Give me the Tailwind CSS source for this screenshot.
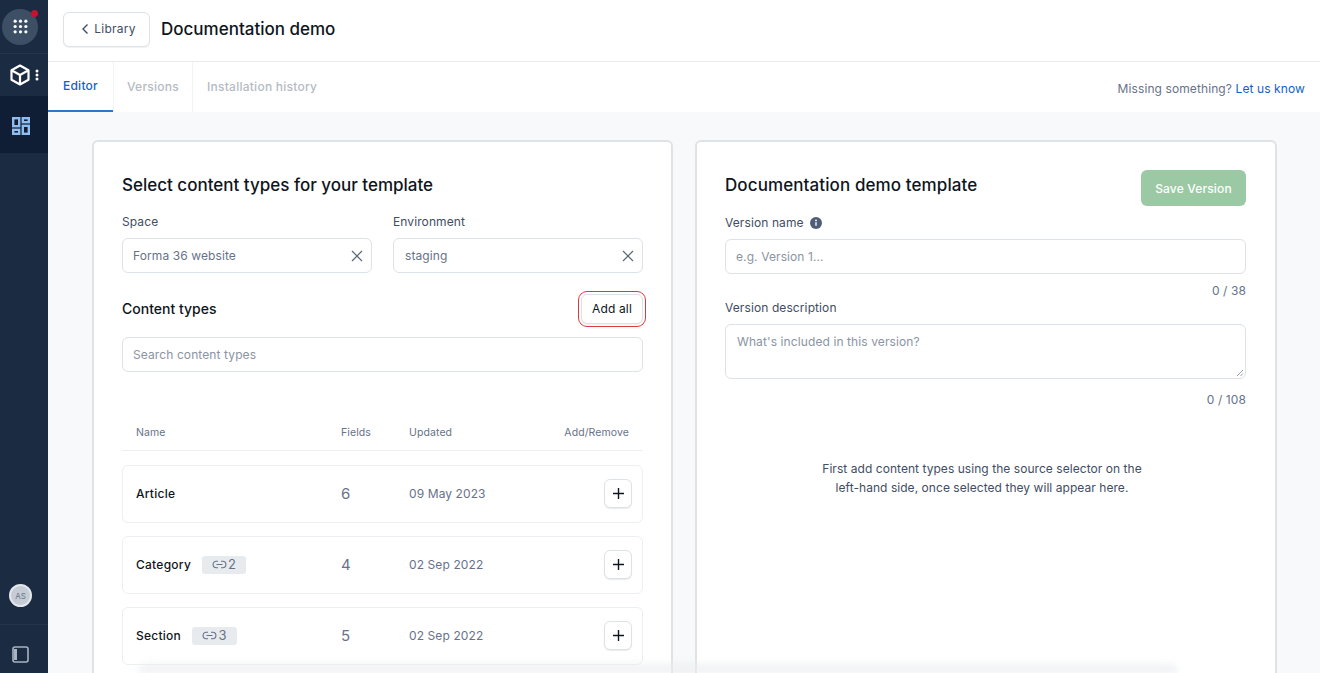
<!DOCTYPE html>
<html lang="en">
<head>
  <meta charset="utf-8" />
  <title>Documentation demo</title>
  <script src="https://cdn.jsdelivr.net/npm/@tailwindcss/browser@4"></script>
</head>
<body class="h-[673px] overflow-hidden flex bg-white font-['Inter',sans-serif] text-[#0e1520]">
  <!-- sidebar -->
  <aside class="w-[48px] shrink-0 h-full flex flex-col bg-[#1b2b41]">
    <div class="h-[54px] flex items-center pl-[2px] border-b border-[#26364b]">
      <div class="relative w-[36px] h-[36px] rounded-full bg-[#3c4f65] flex items-center justify-center">
        <svg width="15" height="15" viewBox="0 0 14 14" fill="#fff"><circle cx="2" cy="2" r="1.500"/><circle cx="7" cy="2" r="1.500"/><circle cx="12" cy="2" r="1.500"/><circle cx="2" cy="7" r="1.500"/><circle cx="7" cy="7" r="1.500"/><circle cx="12" cy="7" r="1.500"/><circle cx="2" cy="12" r="1.500"/><circle cx="7" cy="12" r="1.500"/><circle cx="12" cy="12" r="1.500"/></svg>
        <span class="absolute top-[1px] right-[0px] w-[7px] h-[7px] rounded-full bg-[#c4122f]"></span>
      </div>
    </div>
    <div class="h-[42px] flex items-center pl-[10px] gap-[5px]">
      <svg width="20" height="22" viewBox="0 0 20 22" fill="none" stroke="#fff" stroke-width="2.200" stroke-linejoin="round"><path d="M10 1.500l8.500 4.800v9.400L10 20.500l-8.500-4.800V6.300z"/><path d="M1.500 6.300L10 11l8.500-4.700M10 11v9.500"/></svg>
      <svg width="4" height="12" viewBox="0 0 4 12" fill="#fff"><circle cx="2" cy="2" r="1.500"/><circle cx="2" cy="6" r="1.500"/><circle cx="2" cy="10" r="1.500"/></svg>
    </div>
    <div class="h-[57px] bg-[#0f1e35] flex items-start pt-[21px] pl-[12px]">
      <svg width="18" height="18" viewBox="0 0 18 18" fill="none" stroke="#8fbdf0" stroke-width="2.400"><rect x="1.200" y="1.200" width="6" height="8"/><rect x="10.800" y="1.200" width="6" height="4"/><rect x="1.200" y="12.800" width="6" height="4"/><rect x="10.800" y="8.800" width="6" height="8"/></svg>
    </div>
    <div class="flex-1"></div>
    <div class="h-[60px] flex items-center justify-center border-b border-[#25354a] pr-[7px] pt-[2px]">
      <div class="w-[23px] h-[23px] rounded-full bg-[#c5ccd5] border-2 border-[#e4e8ec] flex items-center justify-center text-[8px] text-[#6b7686]">AS</div>
    </div>
    <div class="h-[48px] flex items-start justify-center pt-[21px] pr-[7px]">
      <svg width="17" height="17" viewBox="0 0 17 17" fill="none" stroke="#a9b4c1" stroke-width="1.600"><rect x="1" y="1" width="15" height="15" rx="2"/><path d="M3.500 3v11" stroke-width="3" stroke="#a9b4c1"/></svg>
    </div>
  </aside>

  <div class="relative flex-1 min-w-0 h-full flex flex-col overflow-hidden">
    <!-- top bar -->
    <header class="h-[62px] shrink-0 flex items-center pl-[15px] pb-[3px] gap-[11px] border-b border-[#e7ebee]">
      <button class="h-[35px] w-[87px] rounded-md border border-[#dde2e6] bg-white flex items-center justify-center gap-[5px] text-[12px] text-[#414d63] tracking-[0.25px] pl-[4px] shadow-[0_1px_1px_rgba(0,0,0,0.06)]">
        <svg width="8" height="12" viewBox="0 0 8 12" fill="none" stroke="#414d63" stroke-width="1.400"><path d="M6.500 1.500L2 6l4.500 4.500"/></svg>
        Library
      </button>
      <h1 class="text-[17px] font-medium pt-[2px]">Documentation demo</h1>
    </header>
    <!-- tabs -->
    <nav class="h-[50px] shrink-0 flex items-center text-[12px] font-medium tracking-[0.25px] bg-white">
      <a class="h-full w-[65px] flex items-center justify-center text-[#0f62c9] border-b-2 border-[#2f74d0]">Editor</a>
      <a class="h-full w-[80px] flex items-center justify-center text-[#b4bbc4] border-l border-r border-[#f1f3f5] pb-[1px]">Versions</a>
      <a class="h-full ml-[14px] flex items-center text-[#b4bbc4] pb-[1px]">Installation history</a>
      <p class="ml-auto mr-[15px] text-[12px] font-normal text-[#67728a] pt-[4px] tracking-[0.1px]">Missing something? <span class="text-[#0f62c9]">Let us know</span></p>
    </nav>
    <!-- content -->
    <main class="flex-1 min-h-0 bg-[#f7f9fa] pt-[28px] pl-[44px] flex gap-[22px] items-start">
      <section class="w-[581px] h-[620px] shrink-0 bg-white rounded-md border-2 border-[#dfe3e7] pt-[31px] px-[28px]">
        <h2 class="text-[17px] font-medium leading-[24px]">Select content types for your template</h2>
        <div class="flex gap-[21px] mt-[15px] text-[12px] tracking-[0.1px]">
          <div class="w-[250px]">
            <label class="block text-[#414d63] leading-[20px]">Space</label>
            <div class="mt-[6px] h-[35px] rounded-md border border-[#dde2e6] flex items-center justify-between pl-[10px] pr-[8px] text-[#67728a]">
              Forma 36 website
              <svg width="12" height="12" viewBox="0 0 12 12" fill="none" stroke="#5a6679" stroke-width="1.200"><path d="M1 1l10 10M11 1L1 11"/></svg>
            </div>
          </div>
          <div class="w-[250px]">
            <label class="block text-[#414d63] leading-[20px]">Environment</label>
            <div class="mt-[6px] h-[35px] rounded-md border border-[#dde2e6] flex items-center justify-between pl-[11px] pr-[8px] text-[#67728a]">
              staging
              <svg width="12" height="12" viewBox="0 0 12 12" fill="none" stroke="#5a6679" stroke-width="1.200"><path d="M1 1l10 10M11 1L1 11"/></svg>
            </div>
          </div>
        </div>
        <div class="flex items-center justify-between mt-[21px]">
          <h3 class="text-[14px] font-medium -mt-[1px]">Content types</h3>
          <button class="h-[30px] w-[62px] rounded-md border border-[#dde2e6] bg-white text-[12px] tracking-[0.15px] text-[#0e1520] outline-[1.5px] outline-[#dc3a3a] outline-offset-[2px] shadow-[0_1px_1px_rgba(0,0,0,0.06)]">Add all</button>
        </div>
        <div class="mt-[13px] h-[35px] rounded-md border border-[#dde2e6] flex items-center pl-[10px] text-[12px] tracking-[0.1px] text-[#8a94a3]">Search content types</div>
        <!-- table -->
        <div class="mt-[50px] h-[29px] border-b border-[#eceff2] flex items-start pt-[1px] pl-[14px] pr-[14px] text-[10.500px] text-[#67728a] leading-[20px] tracking-[0.1px]">
          <span class="w-[205px]">Name</span>
          <span class="w-[68px]">Fields</span>
          <span>Updated</span>
          <span class="ml-auto">Add/Remove</span>
        </div>
        <div class="mt-[14px] flex flex-col gap-[13px] text-[12px] tracking-[0.1px]">
          <div class="h-[58px] rounded-md border border-[#eceff2] flex items-center pl-[13px] pr-[10px]">
            <div class="w-[205px] flex items-center font-medium tracking-[0.25px]">Article</div>
            <div class="w-[68px] text-[15px] text-[#67728a]">6</div>
            <div class="text-[#67728a]">09 May 2023</div>
            <button class="ml-auto -mt-[1px] w-[28px] h-[29px] rounded-md border border-[#dde2e6] bg-white flex items-center justify-center shadow-[0_1px_1px_rgba(0,0,0,0.08)]"><svg width="11" height="11" viewBox="0 0 11 11" stroke="#0e1520" stroke-width="1.400"><path d="M5.500 0v11M0 5.500h11"/></svg></button>
          </div>
          <div class="h-[58px] rounded-md border border-[#eceff2] flex items-center pl-[13px] pr-[10px]">
            <div class="w-[205px] flex items-center gap-[11px] font-medium tracking-[0.25px]">Category
              <span class="h-[18px] w-[44px] -mt-[1px] rounded-[3px] bg-[#e7ebee] flex items-center justify-center gap-[1px] text-[13px] font-normal text-[#67728a]"><svg width="15" height="9" viewBox="0 0 15 9" fill="none" stroke="#67728a" stroke-width="1.100"><path d="M6 1.300H4.300a3.200 3.200 0 000 6.400H6M9 1.300h1.700a3.200 3.200 0 010 6.400H9M4.500 4.500h6"/></svg>2</span>
            </div>
            <div class="w-[68px] text-[15px] text-[#67728a]">4</div>
            <div class="text-[#67728a]">02 Sep 2022</div>
            <button class="ml-auto -mt-[1px] w-[28px] h-[29px] rounded-md border border-[#dde2e6] bg-white flex items-center justify-center shadow-[0_1px_1px_rgba(0,0,0,0.08)]"><svg width="11" height="11" viewBox="0 0 11 11" stroke="#0e1520" stroke-width="1.400"><path d="M5.500 0v11M0 5.500h11"/></svg></button>
          </div>
          <div class="h-[58px] rounded-md border border-[#eceff2] flex items-center pl-[13px] pr-[10px]">
            <div class="w-[205px] flex items-center gap-[11px] font-medium tracking-[0.25px]">Section
              <span class="h-[18px] w-[45px] -mt-[1px] rounded-[3px] bg-[#e7ebee] flex items-center justify-center gap-[1px] text-[13px] font-normal text-[#67728a]"><svg width="15" height="9" viewBox="0 0 15 9" fill="none" stroke="#67728a" stroke-width="1.100"><path d="M6 1.300H4.300a3.200 3.200 0 000 6.400H6M9 1.300h1.700a3.200 3.200 0 010 6.400H9M4.500 4.500h6"/></svg>3</span>
            </div>
            <div class="w-[68px] text-[15px] text-[#67728a]">5</div>
            <div class="text-[#67728a]">02 Sep 2022</div>
            <button class="ml-auto -mt-[1px] w-[28px] h-[29px] rounded-md border border-[#dde2e6] bg-white flex items-center justify-center shadow-[0_1px_1px_rgba(0,0,0,0.08)]"><svg width="11" height="11" viewBox="0 0 11 11" stroke="#0e1520" stroke-width="1.400"><path d="M5.500 0v11M0 5.500h11"/></svg></button>
          </div>
        </div>
      </section>
      <section class="w-[582px] h-[620px] shrink-0 bg-white rounded-md border-2 border-[#dfe3e7] pt-[28px] pl-[28px] pr-[29px] text-[12px] tracking-[0.1px]">
        <div class="flex justify-between items-start">
          <h2 class="text-[17px] tracking-[0.1px] font-medium leading-[24px] mt-[3px]">Documentation demo template</h2>
          <button class="w-[105px] h-[36px] pt-[1px] rounded-md bg-[#9bc9a4] text-white font-medium tracking-[0.15px]">Save Version</button>
        </div>
        <label class="flex items-center gap-[6px] mt-[7px] text-[#414d63] leading-[20px]">Version name
          <svg width="12" height="12" viewBox="0 0 12 12"><circle cx="6" cy="6" r="6" fill="#4f5d78"/><path d="M6 5.300v3.500" stroke="#fff" stroke-width="1.400"/><circle cx="6" cy="3.400" r="0.900" fill="#fff"/></svg>
        </label>
        <div class="mt-[6px] h-[35px] rounded-md border border-[#dde2e6] flex items-center pl-[10px] text-[#8a94a3]">e.g. Version 1...</div>
        <p class="text-right text-[#67728a] leading-[20px] mt-[7px]">0 / 38</p>
        <label class="block mt-[-3px] text-[#414d63] leading-[20px]">Version description</label>
        <div class="relative mt-[6px] h-[55px] rounded-md border border-[#dde2e6] pl-[11px] pt-[7px] leading-[20px] text-[#8a94a3]">What's included in this version?
          <svg class="absolute right-[1px] bottom-[1px]" width="8" height="8" viewBox="0 0 8 8" stroke="#7b8494" stroke-width="0.800"><path d="M1 7l6-6M4.500 7l2.500-2.500"/></svg>
        </div>
        <p class="text-right text-[#67728a] leading-[20px] mt-[11px]">0 / 108</p>
        <p class="mt-[49px] pr-[7px] text-center leading-[19px] tracking-[0.05px] text-[#414d63]">First add content types using the source selector on the<br />left-hand side, once selected they will appear here.</p>
      </section>
    </main>
    <!-- bottom fade -->
    <div class="absolute bottom-0 left-[90px] w-[1040px] h-[14px] bg-gradient-to-t from-[#eceef0] to-transparent rounded-t-full blur-[3px]"></div>
  </div>
</body>
</html>
